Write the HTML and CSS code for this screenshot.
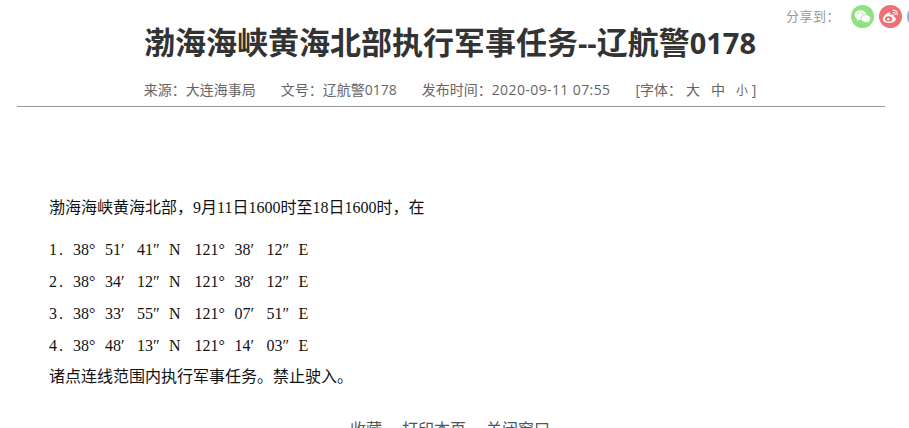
FILE: index.html
```html
<!DOCTYPE html>
<html lang="zh-CN">
<head>
<meta charset="utf-8">
<title>渤海海峡黄海北部执行军事任务--辽航警0178</title>
<link rel="stylesheet" href="styles.css">
</head>
<body>
<div class="share">
  <span class="share-label">分享到：</span>
  <span class="ico wechat"><svg viewBox="0 0 23 23" width="23" height="23"><ellipse cx="9.500" cy="10" rx="5.800" ry="4.800" fill="#fff"/><path d="M6.500 13.500l-.6 2.400 2.800-1.500z" fill="#fff"/><ellipse cx="14.800" cy="13.600" rx="4.800" ry="3.900" fill="#fff" stroke="#8fe27f" stroke-width=".8"/><path d="M17 16.500l1.300 1.700-.2-2.500z" fill="#fff"/><circle cx="7.500" cy="8.500" r=".8" fill="#8fe27f"/><circle cx="11.500" cy="8.500" r=".8" fill="#8fe27f"/></svg></span>
  <span class="ico weibo"><svg viewBox="0 0 23 23" width="23" height="23"><path d="M10 18c-3.400 0-6.200-1.500-6.200-3.800 0-2.300 3.500-6.200 6.200-6.700 1.400-.2 1.500 1 1.200 2.400 1.600-.6 3.700-.7 3.700.8 0 .5-.2.800-.2 1 1.200.4 2.100 1.100 2.100 2.300 0 2-3.100 4-6.800 4z" fill="#fff"/><ellipse cx="9.600" cy="14" rx="3.700" ry="2.700" fill="#ee7073"/><circle cx="9.200" cy="14.200" r="1.300" fill="#fff"/><path d="M14 5.400c2.600-.5 4.800 1.700 4.100 4.400M14.400 7.600c1.200-.2 2.100.7 1.800 1.900" fill="none" stroke="#fff" stroke-width="1.100" stroke-linecap="round"/></svg></span>
  <span class="ico third"></span>
</div>
<main class="page">
  <header class="head">
    <h1 class="title">渤海海峡黄海北部执行军事任务<span class="latin">--</span>辽航警<span class="latin">0178</span></h1>
    <div class="meta">
      <span>来源：大连海事局</span>
      <span>文号：辽航警0178</span>
      <span>发布时间：<span class="date">2020-09-11 07:55</span></span>
      <span class="sizes">[字体：<b class="big">大</b><b>中</b><b class="small">小</b> ]</span>
    </div>
  </header>
  <article class="content">
    <p class="lead">渤海海峡黄海北部，9月11日1600时至18日1600时，在</p>
    <p class="coord"><span class="num">1.</span>38<i>°</i>51<i>′</i>41<i>″</i>N<u></u>121<i>°</i>38<i>′</i>12<i>″</i>E</p>
    <p class="coord"><span class="num">2.</span>38<i>°</i>34<i>′</i>12<i>″</i>N<u></u>121<i>°</i>38<i>′</i>12<i>″</i>E</p>
    <p class="coord"><span class="num">3.</span>38<i>°</i>33<i>′</i>55<i>″</i>N<u></u>121<i>°</i>07<i>′</i>51<i>″</i>E</p>
    <p class="coord"><span class="num">4.</span>38<i>°</i>48<i>′</i>13<i>″</i>N<u></u>121<i>°</i>14<i>′</i>03<i>″</i>E</p>
    <p class="end">诸点连线范围内执行军事任务。禁止驶入。</p>
  </article>
  <nav class="actions">
    <a>收藏</a><a>打印本页</a><a>关闭窗口</a>
  </nav>
</main>
</body>
</html>
```
FILE: styles.css
```css
html, body { margin: 0; padding: 0; height: 428px; overflow: hidden; background: #fff; }
body { font-family: "Open Sans", "Noto Sans CJK SC", sans-serif; position: relative; }

.share { position: absolute; top: 5px; left: 786px; display: flex; align-items: center; white-space: nowrap; }
.share-label { font-size: 13px; color: #999; width: 65px; margin-bottom: 2px; letter-spacing: .5px; }
.ico { width: 23px; height: 23px; border-radius: 50%; margin-right: 5px; flex: none; display: block; }
.ico svg { display: block; }
.wechat { background: #8fe27f; }
.weibo { background: #ee7073; }
.third { background: #6cb8ee; }

.page { margin: 0 24px 0 17px; }
.head { border-bottom: 1px solid #999; height: 106px; text-align: center; }
.title { margin: 0; padding: 18px 2px 0 0; font-size: 31px; line-height: 48px; font-weight: 700; color: #333; }
.latin { font-size: 29px; }
.meta { margin-top: 11px; padding-right: 2px; font-size: 14px; line-height: 24px; color: #666; display: flex; justify-content: center; }
.meta > span { margin-right: 25px; }
.meta > .sizes { margin-right: 0; }
.date { letter-spacing: .4px; }
.sizes b { font-weight: 400; margin-right: 11px; }
.sizes .big { margin-left: 4px; }
.sizes .small { font-size: 12px; margin-right: 0; }

.content { padding: 89px 0 0 32px; font-family: "Liberation Serif", "Noto Sans CJK SC", serif; font-size: 16px; line-height: 24px; color: #111; }
.content p { margin: 0 0 8px; }
.content .lead { margin-bottom: 18px; }
.coord { white-space: nowrap; }
.num { display: inline-block; width: 24px; letter-spacing: 2px; }
.coord i { display: inline-block; width: 16px; font-style: normal; }
.coord u { display: inline-block; width: 14px; text-decoration: none; }
.content .end { margin-top: -1px; }

.actions { margin-top: 28px; display: flex; justify-content: center; gap: 20px; padding-right: 2px; font-size: 16px; line-height: 24px; color: #555; }
```
